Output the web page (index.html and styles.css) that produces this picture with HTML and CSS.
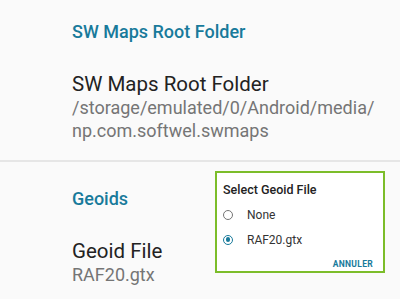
FILE: index.html
```html
<!DOCTYPE html>
<html lang="en">
<head>
    <meta charset="UTF-8">
    <title>Settings</title>
    <link rel="stylesheet" href="styles.css">
</head>
<body>
    <div class="settings">
        <div class="category">
            <h3 class="category-title">SW Maps Root Folder</h3>
            <div class="pref">
                <div class="pref-title">SW Maps Root Folder</div>
                <div class="pref-summary">/storage/emulated/0/Android/media/<br>np.com.softwel.swmaps</div>
            </div>
        </div>
        <div class="divider"></div>
        <div class="category">
            <h3 class="category-title second">Geoids</h3>
            <div class="pref">
                <div class="pref-title">Geoid File</div>
                <div class="pref-summary">RAF20.gtx</div>
            </div>
        </div>
    </div>

    <div class="dialog">
        <div class="dialog-title">Select Geoid File</div>
        <label class="choice">
            <span class="radio"></span>
            <span class="choice-text">None</span>
        </label>
        <label class="choice">
            <span class="radio checked"></span>
            <span class="choice-text">RAF20.gtx</span>
        </label>
        <div class="dialog-actions">
            <span class="dialog-btn">ANNULER</span>
        </div>
    </div>
</body>
</html>
```

FILE: styles.css
```css
body {
    margin: 0;
    background-color: #fafafa;
    font-family: Roboto, "Noto Sans", sans-serif;
    color: #212121;
    height: 299px;
    overflow: hidden;
    position: relative;
}

.category {
    padding-left: 72px;
}

.category-title {
    margin: 0;
    padding-top: 22px;
    font-size: 18px;
    line-height: 20px;
    font-weight: 500;
    color: #187a9b;
}

.category-title.second {
    padding-top: 27px;
}

.pref {
    padding-top: 30px;
}

.pref-title {
    font-size: 20.5px;
    line-height: 24px;
    color: #222222;
}

.pref-summary {
    font-size: 18px;
    line-height: 23px;
    color: #757575;
}

.divider {
    height: 2px;
    background-color: #e6e6e6;
    margin-top: 18px;
}

/* dialog over the list */
.dialog {
    position: absolute;
    left: 215px;
    top: 171px;
    width: 166px;
    height: 98px;
    border: 2px solid #7cbd2a;
    background-color: #ffffff;
}

.dialog-title {
    font-size: 12.5px;
    font-weight: 500;
    line-height: 16px;
    color: #222222;
    padding: 9px 0 0 6px;
}

.choice {
    display: flex;
    align-items: center;
    height: 25px;
    padding-left: 6px;
}

.choice:first-of-type {
    margin-top: 4px;
}

.radio {
    width: 10px;
    height: 10px;
    border: 1.4px solid #757575;
    border-radius: 50%;
    box-sizing: border-box;
    display: flex;
    align-items: center;
    justify-content: center;
}

.radio.checked {
    border-color: #187a9b;
}

.radio.checked::after {
    content: "";
    width: 4.5px;
    height: 4.5px;
    border-radius: 50%;
    background-color: #187a9b;
}

.choice-text {
    margin-left: 14px;
    font-size: 12px;
    color: #333333;
}

.dialog-actions {
    display: flex;
    justify-content: flex-end;
    padding: 7px 10px 0 0;
}

.dialog-btn {
    font-size: 8.5px;
    font-weight: 700;
    letter-spacing: 0.3px;
    color: #187a9b;
}
```
